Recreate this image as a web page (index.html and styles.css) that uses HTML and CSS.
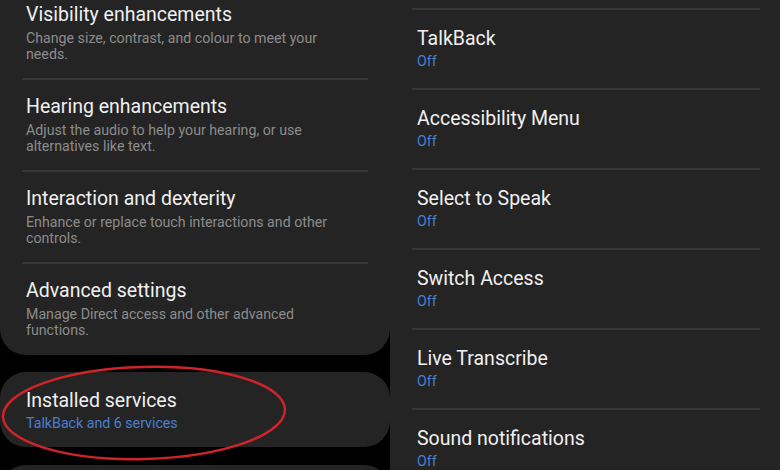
FILE: index.html
```html
<!DOCTYPE html>
<html lang="en">
<head>
    <meta charset="UTF-8">
    <meta name="viewport" content="width=device-width, initial-scale=1.0">
    <title>Accessibility</title>
    <link rel="stylesheet" href="styles.css">
</head>
<body>
    <div class="screen">
        <!-- Left: accessibility categories -->
        <div class="left-col">
            <div class="card card-top">
                <div class="item">
                    <div class="title">Visibility enhancements</div>
                    <div class="summary">Change size, contrast, and colour to meet your needs.</div>
                </div>
                <div class="divider"></div>
                <div class="item">
                    <div class="title">Hearing enhancements</div>
                    <div class="summary">Adjust the audio to help your hearing, or use alternatives like text.</div>
                </div>
                <div class="divider"></div>
                <div class="item">
                    <div class="title">Interaction and dexterity</div>
                    <div class="summary">Enhance or replace touch interactions and other controls.</div>
                </div>
                <div class="divider"></div>
                <div class="item item-last">
                    <div class="title">Advanced settings</div>
                    <div class="summary">Manage Direct access and other advanced functions.</div>
                </div>
            </div>

            <div class="card card-services">
                <div class="item item-single">
                    <div class="title">Installed services</div>
                    <div class="status">TalkBack and 6 services</div>
                </div>
                <svg class="circle-mark" width="300" height="104" viewBox="0 0 300 104">
                    <ellipse cx="146" cy="50" rx="141" ry="46" transform="rotate(-1.5 146 50)" fill="none" stroke="#d0242b" stroke-width="2.5"/>
                </svg>
            </div>

            <div class="card card-next"></div>
        </div>

        <!-- Right: installed services -->
        <div class="right-col">
            <div class="divider wide"></div>
            <div class="service">
                <div class="title">TalkBack</div>
                <div class="status">Off</div>
            </div>
            <div class="divider wide"></div>
            <div class="service">
                <div class="title">Accessibility Menu</div>
                <div class="status">Off</div>
            </div>
            <div class="divider wide"></div>
            <div class="service">
                <div class="title">Select to Speak</div>
                <div class="status">Off</div>
            </div>
            <div class="divider wide"></div>
            <div class="service">
                <div class="title">Switch Access</div>
                <div class="status">Off</div>
            </div>
            <div class="divider wide"></div>
            <div class="service">
                <div class="title">Live Transcribe</div>
                <div class="status">Off</div>
            </div>
            <div class="divider wide"></div>
            <div class="service">
                <div class="title">Sound notifications</div>
                <div class="status">Off</div>
            </div>
        </div>
    </div>
</body>
</html>
```

FILE: styles.css
```css
body {
    margin: 0;
    background-color: #000;
    font-family: Roboto, "Noto Sans", Arial, sans-serif;
    overflow: hidden;
}

.screen {
    display: grid;
    grid-template-columns: 390px 390px;
    height: 470px;
    overflow: hidden;
}

.left-col {
    display: flex;
    flex-direction: column;
    gap: 17px;
}

.card {
    background-color: #242424;
    border-radius: 26px;
    position: relative;
}

.card-top {
    margin-top: -12px;
    border-top-left-radius: 0;
    border-top-right-radius: 0;
}

.card-services {
    height: 75px;
}

.card-next {
    height: 60px;
    margin-top: 1px;
}

.item {
    padding: 15px 26px 16px 26px;
}

.item-last {
    padding-bottom: 17px;
}

.item-single {
    padding: 17px 26px 16px 26px;
}

.title {
    color: #f0f0f0;
    font-size: 19.5px;
    line-height: 24px;
}

.summary {
    color: #8c8c8c;
    font-size: 14.2px;
    line-height: 16px;
    margin-top: 3px;
    padding-right: 30px;
}

.status {
    color: #4a7fd3;
    font-size: 14.2px;
    line-height: 16px;
    margin-top: 2px;
}

.divider {
    height: 2px;
    background-color: #363636;
    margin: 0 22px;
}

.divider.wide {
    margin: 0 20px 0 22px;
}

.circle-mark {
    position: absolute;
    left: -2px;
    top: -9px;
}

.right-col {
    background-color: #242424;
    padding-top: 8px;
}

.service {
    padding: 17px 27px 19px 27px;
}
```
